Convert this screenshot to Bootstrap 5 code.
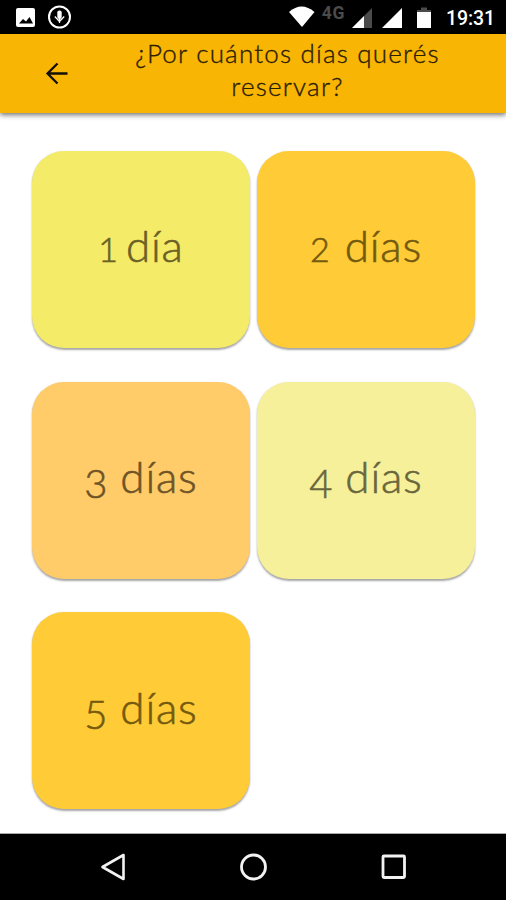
<!DOCTYPE html>
<html lang="es">
<head>
<meta charset="utf-8">
<meta name="viewport" content="width=device-width, initial-scale=1">
<title>¿Por cuántos días querés reservar?</title>
<link href="https://cdn.jsdelivr.net/npm/bootstrap@5.3.0/dist/css/bootstrap.min.css" rel="stylesheet">
<style>
body { font-family: Lato, "Open Sans", sans-serif; }
.status-bar { height: 34px; padding: 0 11px 0 15px; }
.status-bar svg, .system-nav svg, .app-header svg { display: block; flex: none; }
.network { font: 700 17.5px/1 Roboto, sans-serif; color: #4b4b4b; margin: 0 3px 6px 7px; letter-spacing: .6px; }
.clock { font: 500 19.5px/1 Roboto, sans-serif; margin: 4px 0 0 14px; letter-spacing: -.1px; }
.app-header { height: 79px; background: #f9b504; box-shadow: 0 2px 5px rgba(0,0,0,.55); }
.back { padding: 0 0 0 45px; width: 69px; }
.title { font-size: 26px; line-height: 33px; letter-spacing: 1.2px; color: #2b2005; -webkit-text-stroke: .35px currentColor; padding: 3px 0 10px; width: 437px; font-weight: 300; }
.days { padding: 38px 31px 0 32px; display: grid; grid-template-columns: 218px 218px; column-gap: 7px; row-gap: 33.5px; }
.day { height: 197px; border-radius: 32px; box-shadow: 0 1.5px 2px rgba(0,0,0,.35); -webkit-text-stroke: .6px currentColor; font-size: 44px; font-weight: 300; line-height: 54px; letter-spacing: .8px; padding: 0 0 6px; }
.num { font-size: 34px; margin-right: 14px; display: inline-block; }
.one { margin-right: 7px; }
.low { font-size: 40px; margin-right: 12px; transform: translateY(5px); }
.c1 { background: #f4eb69; color: #6b6126; }
.c2 { background: #ffcb36; color: #745a0f; }
.c3 { background: #ffcc69; color: #6f5427; }
.c4 { background: #f5f099; color: #6a663c; }
.system-nav { height: 67px; border-top: 1px solid #aaa; padding: 0 99px 0 100px; }
</style>
</head>
<body class="bg-white overflow-hidden">
<div class="vh-100 d-flex flex-column">
  <div class="status-bar bg-black text-white d-flex align-items-center">
    <svg width="60" height="34" viewBox="0 0 60 34"><rect x="1" y="8" width="19" height="19" rx="2" fill="#fff"/><path d="M4 23.500l4-4.500 3 2.500 3.500-4.500 3.500 6.500z" fill="#000"/><circle cx="44.500" cy="17" r="10.500" fill="none" stroke="#fff" stroke-width="2"/><rect x="42.300" y="10.500" width="4.400" height="8.500" rx="2" fill="#fff"/><path d="M39.800 16.500l4.700 5 4.700-5M44.500 18v5" fill="none" stroke="#fff" stroke-width="1.300"/></svg>
    <svg class="ms-auto" width="26" height="34" viewBox="0 0 26 34"><path d="M0 12Q12.500 1 25.500 12L13 27z" fill="#fff"/></svg>
    <span class="network">4G</span>
    <svg width="84" height="34" viewBox="0 0 84 34"><path d="M4 28L24 8v20z" fill="#4b4b4b"/><path d="M4 28l12-12V28z" fill="#fff"/><path d="M34 28L54 8v20z" fill="#fff"/><path d="M73 7.500h6V10h4v2H69v-2h4z" fill="#4b4b4b"/><path d="M69 12h14v16H69z" fill="#fff"/></svg>
    <span class="clock">19:31</span>
  </div>
  <header class="app-header d-flex align-items-center flex-shrink-0 position-relative">
    <a class="back text-dark" href="#" aria-label="Volver"><svg width="24" height="24" viewBox="0 0 24 24"><path d="M22.500 11.500H3M12.500 1.500l-10 10 10 10" fill="none" stroke="#130f02" stroke-width="2.300"/></svg></a>
    <h1 class="title text-center m-0">¿Por cuántos días querés<br>reservar?</h1>
  </header>
  <main class="days">
    <button class="day btn border-0 c1"><span class="num one">1</span>día</button>
    <button class="day btn border-0 c2"><span class="num">2</span>días</button>
    <button class="day btn border-0 c3"><span class="num low">3</span>días</button>
    <button class="day btn border-0 c4"><span class="num low">4</span>días</button>
    <button class="day btn border-0 c2"><span class="num low">5</span>días</button>
  </main>
  <nav class="system-nav bg-black mt-auto d-flex align-items-center justify-content-between">
    <svg width="28" height="30" viewBox="0 0 28 30"><path d="M2.500 15L23.500 3v24z" fill="none" stroke="#f2f2f2" stroke-width="2.600" stroke-linejoin="round"/></svg>
    <svg width="28" height="30" viewBox="0 0 28 30"><circle cx="13.500" cy="15" r="12" fill="none" stroke="#f2f2f2" stroke-width="2.800"/></svg>
    <svg width="28" height="30" viewBox="0 0 28 30"><rect x="4" y="4" width="21.500" height="21.500" rx="1" fill="none" stroke="#f2f2f2" stroke-width="2.800"/></svg>
  </nav>
</div>
<script src="https://cdn.jsdelivr.net/npm/bootstrap@5.3.0/dist/js/bootstrap.bundle.min.js"></script>
</body>
</html>
